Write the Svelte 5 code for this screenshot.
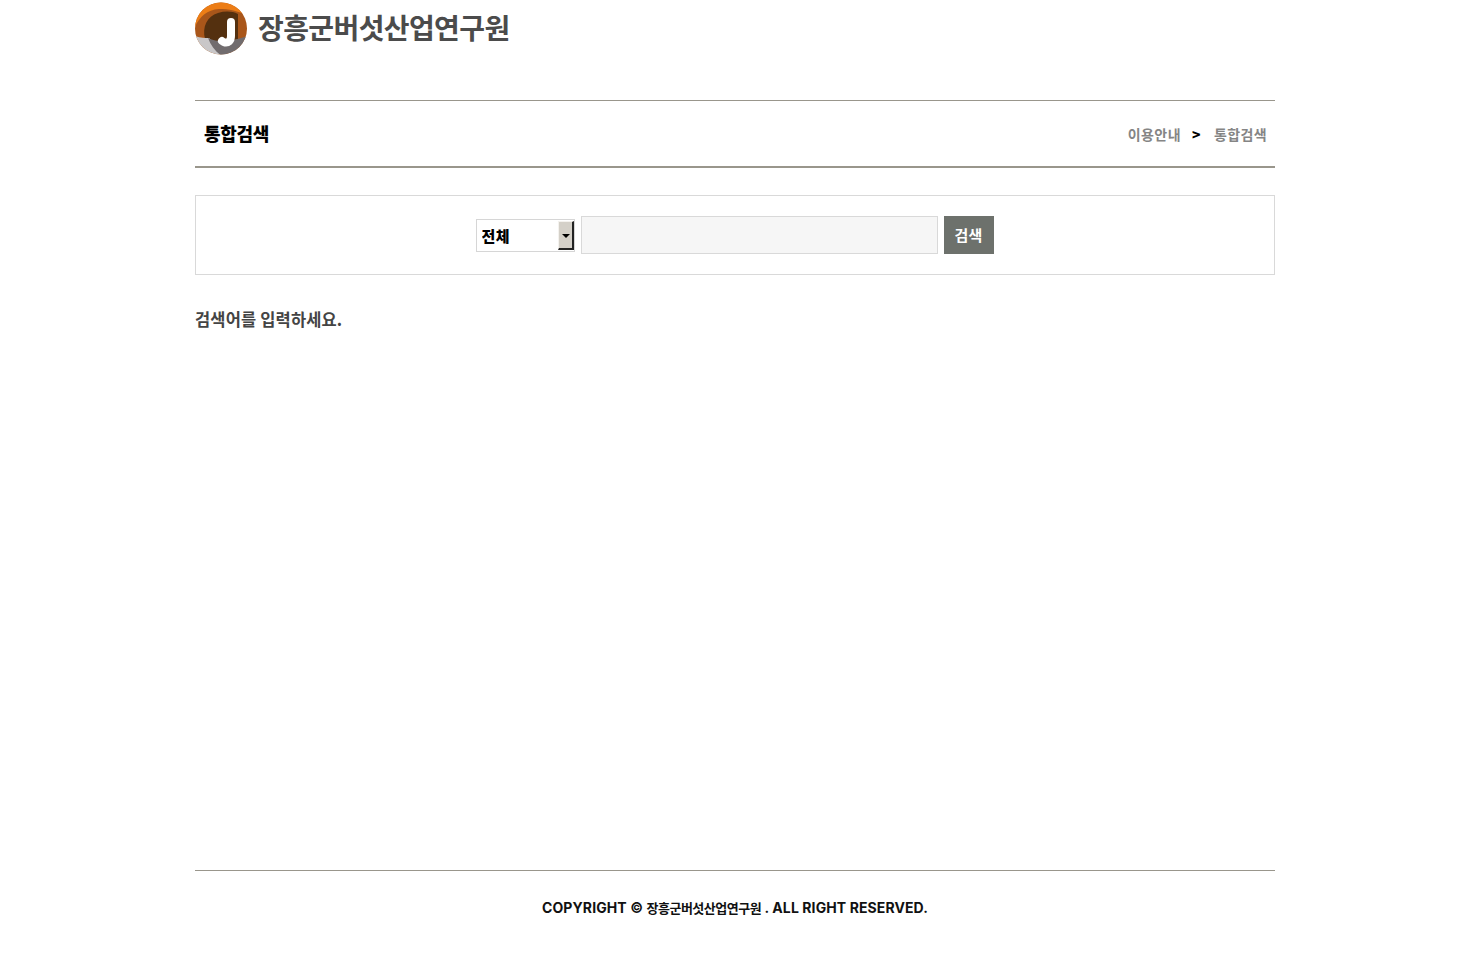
<script>
	let keyword = $state('');
</script>

<div class="wrap">
	<header>
		<a class="logo" href="#top">
			<svg width="53" height="54" viewBox="0 0 53 54" aria-hidden="true">
				<defs>
					<clipPath id="disc"><circle cx="26" cy="27.5" r="26"/></clipPath>
				</defs>
				<g clip-path="url(#disc)">
					<rect width="53" height="56" fill="#a9561a"/>
					<path d="M0 0H53V15C44 10 34 8 24 8C12 9 5 15 0 26Z" fill="#ec7d16"/>
					<path d="M10 38C7 26 12 15 23 12C30 10 37 10 43 13V38L26 42Z" fill="#54300f"/>
					<path d="M0 35C6 37 10 37 14 37L34 56H0Z" fill="#c9c7c8"/>
					<path d="M13 37C24 42 36 41 53 35V56H28C21 51 16 45 13 37Z" fill="#716c6e"/>
				</g>
				<path d="M36 21V35C36 40 33 42 30 41.5C29 41.3 28 40.8 27 40" fill="none" stroke="#fff" stroke-width="8" stroke-linecap="round"/>
			</svg>
			<span>장흥군버섯산업연구원</span>
		</a>
	</header>

	<div class="title-bar">
		<h2>통합검색</h2>
		<div class="crumbs">
			<span>이용안내</span>
			<b>&gt;</b>
			<span>통합검색</span>
		</div>
	</div>

	<form class="search" onsubmit={(e) => e.preventDefault()}>
		<div class="select">
			<select aria-label="검색 범위">
				<option>전체</option>
			</select>
			<span class="arrow"></span>
		</div>
		<input type="text" bind:value={keyword} aria-label="검색어" />
		<button type="submit">검색</button>
	</form>

	<p class="notice">검색어를 입력하세요.</p>

	<footer>COPYRIGHT © <small>장흥군버섯산업연구원</small> . ALL RIGHT RESERVED.</footer>
</div>

<style>
	:global(body) {
		background: #fff;
		font-family: "Noto Sans CJK KR", "Noto Sans", sans-serif;
	}
	.wrap {
		width: 1080px;
		margin: 0 auto;
		height: 970px;
		display: flex;
		flex-direction: column;
	}
	header {
		height: 100px;
		flex: none;
	}
	.logo {
		display: flex;
		align-items: flex-start;
		gap: 10px;
		color: #4b4b4b;
		text-decoration: none;
		padding-top: 1px;
	}
	.logo span {
		font-size: 28px;
		font-weight: 700;
		line-height: 52px;
		letter-spacing: -0.6px;
		white-space: nowrap;
	}
	.title-bar {
		height: 65px;
		flex: none;
		border-top: 1px solid #99968c;
		border-bottom: 2px solid #99968c;
		display: flex;
		align-items: center;
		justify-content: space-between;
		padding: 0 8px 0 9px;
	}
	h2 {
		margin: 0 0 2px;
		font-size: 18px;
		font-weight: 900;
		letter-spacing: -0.3px;
		color: #000;
	}
	.crumbs {
		display: flex;
		align-items: center;
		gap: 11px;
		font-size: 14px;
		font-weight: 700;
		letter-spacing: 0.4px;
		color: #858585;
	}
	.crumbs b {
		color: #000;
		font-weight: 900;
		padding: 0 2px 0 0;
	}
	.search {
		margin-top: 27px;
		height: 80px;
		flex: none;
		box-sizing: border-box;
		border: 1px solid #d9d9d9;
		display: flex;
		align-items: center;
		justify-content: center;
		gap: 6px;
		padding-right: 1px;
	}
	.select {
		position: relative;
		width: 99px;
		height: 33px;
		margin-top: 1px;
	}
	select {
		appearance: none;
		width: 100%;
		height: 100%;
		box-sizing: border-box;
		border: 1px solid #d6d6d6;
		border-radius: 0;
		background: #fff;
		padding: 0 0 1px 5px;
		font-family: inherit;
		font-size: 15px;
		font-weight: 900;
		letter-spacing: 0.5px;
		color: #000;
		outline: none;
	}
	.arrow {
		position: absolute;
		top: 2px;
		right: 1px;
		width: 16px;
		height: 29px;
		box-sizing: border-box;
		background: #d4d0c8;
		border-top: 1px solid #f4f2ee;
		border-left: 1px solid #f4f2ee;
		border-right: 2px solid #222;
		border-bottom: 2px solid #222;
		pointer-events: none;
	}
	.arrow::after {
		content: "";
		position: absolute;
		left: 3px;
		top: 12px;
		border: 4px solid transparent;
		border-top: 4px solid #000;
		border-bottom: 0;
	}
	input {
		width: 357px;
		height: 38px;
		box-sizing: border-box;
		border: 1px solid #d9d9d9;
		background: #f6f6f6;
		outline: none;
		padding: 0 8px;
	}
	button {
		width: 50px;
		height: 38px;
		border: 0;
		padding: 0 0 2px;
		background: #6d716c;
		color: #fff;
		font-family: inherit;
		font-size: 15px;
		font-weight: 700;
		letter-spacing: 0.3px;
	}
	.notice {
		margin: 33px 0 0;
		font-size: 16.5px;
		font-weight: 700;
		line-height: 22px;
		letter-spacing: 0.15px;
		color: #444;
	}
	footer {
		margin-top: auto;
		margin-bottom: 50px;
		height: 50px;
		box-sizing: border-box;
		border-top: 1px solid #99968c;
		padding-top: 27px;
		text-align: center;
		font-family: Inter, "Noto Sans CJK KR", sans-serif;
		font-size: 14px;
		font-weight: 700;
		line-height: 20px;
		letter-spacing: 0.1px;
		color: #111;
	}
	footer small {
		font-size: 13px;
		letter-spacing: -0.5px;
	}
</style>
